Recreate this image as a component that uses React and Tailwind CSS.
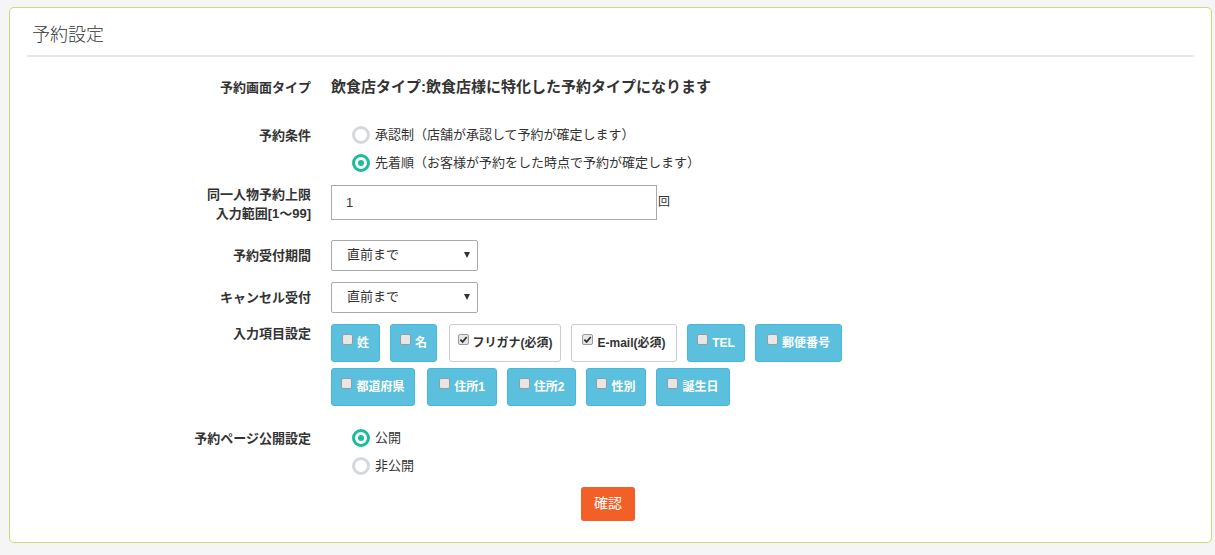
import React, { useState } from "react";

const jp = { fontFamily: '"Liberation Sans", "Noto Sans CJK JP", sans-serif' };

const Radio = ({ checked, label, onClick }) => (
  <label className="flex items-center gap-[5px] cursor-pointer h-[28px]" onClick={onClick}>
    <span
      className={`w-[18px] h-[18px] rounded-full border-[3px] flex items-center justify-center ${
        checked ? "border-[#1abc9c]" : "border-[#d5d9dc]"
      }`}
    >
      {checked && <span className="w-[6px] h-[6px] rounded-full bg-[#1abc9c]" />}
    </span>
    <span className="text-[13px] text-[#333]">{label}</span>
  </label>
);

const Box = ({ checked }) => (
  <span className="w-[11px] h-[11px] rounded-[2px] border border-[#9a9a9a] bg-[#e6e6e6] flex items-center justify-center -mt-[7px] shrink-0">
    {checked && (
      <svg viewBox="0 0 10 10" className="w-[9px] h-[9px]">
        <path d="M1.5 5.2 L4 7.6 L8.6 2.2" fill="none" stroke="#333" strokeWidth="2" />
      </svg>
    )}
  </span>
);

const Field = ({ label, checked, required, w }) =>
  required ? (
    <div className={`${w} h-[38px] rounded-[3px] border border-[#ccc] bg-white flex items-center justify-center gap-[4px] text-[12px] font-bold text-[#333]`}>
      <Box checked={checked} />
      <span>{label}</span>
    </div>
  ) : (
    <div className={`${w} h-[38px] rounded-[3px] border border-[#46b8da] bg-[#5bc0de] flex items-center justify-center gap-[4px] text-[12px] font-bold text-white`}>
      <Box checked={checked} />
      <span>{label}</span>
    </div>
  );

const Row = ({ label, children, className = "" }) => (
  <div className={`flex ${className}`}>
    <div className="w-[284px] text-right text-[13px] font-bold text-[#333] leading-[19px]">{label}</div>
    <div className="ml-[20px] flex-1">{children}</div>
  </div>
);

export default function App() {
  const [cond, setCond] = useState(1);
  const [pub, setPub] = useState(0);

  return (
    <div className="min-h-[555px] bg-[#f5f5f5] pt-[7px] pl-[9px] pr-[3px]" style={jp}>
      <div className="h-[536px] bg-white border border-[#c9da7b] rounded-[5px]">
        <div className="px-[17px]">
          <div className="h-[47px] flex items-end pl-[5px] pb-[6px] text-[18px] text-[#333] font-light">予約設定</div>
          <div className="h-[2px] bg-[#e4e8ec]" />
        </div>

        <div className="px-[17px]">
          <Row label="予約画面タイプ" className="mt-[19px] items-center">
            <div className="text-[15px] font-bold text-[#333]">飲食店タイプ:飲食店様に特化した予約タイプになります</div>
          </Row>

          <Row label="予約条件" className="mt-[27px]">
            <div className="pl-[21px] -mt-[5px]">
              <Radio checked={cond === 0} onClick={() => setCond(0)} label="承認制（店舗が承認して予約が確定します）" />
              <Radio checked={cond === 1} onClick={() => setCond(1)} label="先着順（お客様が予約をした時点で予約が確定します）" />
            </div>
          </Row>

          <Row label={<>同一人物予約上限<br />入力範囲[1～99]</>} className="mt-[8px]">
            <div className="flex items-center">
              <input
                defaultValue="1"
                className="w-[326px] h-[35px] border border-[#aaa] px-[14px] text-[13px] text-[#333] outline-none"
              />
              <span className="text-[12px] text-[#333] ml-[1px]">回</span>
            </div>
          </Row>

          <Row label="予約受付期間" className="mt-[17px] items-center">
            <Selectish />
          </Row>

          <Row label="キャンセル受付" className="mt-[11px] items-center">
            <Selectish />
          </Row>

          <Row label="入力項目設定" className="mt-[11px]">
            <div className="flex flex-col gap-[6px]">
              <div className="flex gap-[10px]">
                <Field label="姓" w="w-[49px]" />
                <Field label="名" w="w-[47px]" />
                <Field label="フリガナ(必須)" checked required w="w-[112px] ml-[2px]" />
                <Field label="E-mail(必須)" checked required w="w-[106px]" />
                <Field label="TEL" w="w-[58px]" />
                <Field label="郵便番号" w="w-[87px]" />
              </div>
              <div className="flex gap-[10px]">
                <Field label="都道府県" w="w-[84px]" />
                <Field label="住所1" w="w-[70px] ml-[2px]" />
                <Field label="住所2" w="w-[69px]" />
                <Field label="性別" w="w-[60px]" />
                <Field label="誕生日" w="w-[74px]" />
              </div>
            </div>
          </Row>

          <Row label="予約ページ公開設定" className="mt-[23px]">
            <div className="pl-[21px] -mt-[5px]">
              <Radio checked={pub === 0} onClick={() => setPub(0)} label="公開" />
              <Radio checked={pub === 1} onClick={() => setPub(1)} label="非公開" />
            </div>
          </Row>

          <div className="flex justify-center mt-[7px]">
            <button className="w-[54px] h-[34px] rounded-[3px] bg-[#f25f27] text-white text-[14px] ml-[-5px]">確認</button>
          </div>
        </div>
      </div>
    </div>
  );
}

function Selectish() {
  return (
    <div className="relative w-[147px] h-[31px] border border-[#aaa] rounded-[2px] flex items-center pl-[15px] text-[13px] text-[#333]">
      直前まで
      <span className="absolute right-[7px] top-[11px] w-0 h-0 border-l-[3px] border-r-[3px] border-t-[6px] border-l-transparent border-r-transparent border-t-[#333]" />
    </div>
  );
}
